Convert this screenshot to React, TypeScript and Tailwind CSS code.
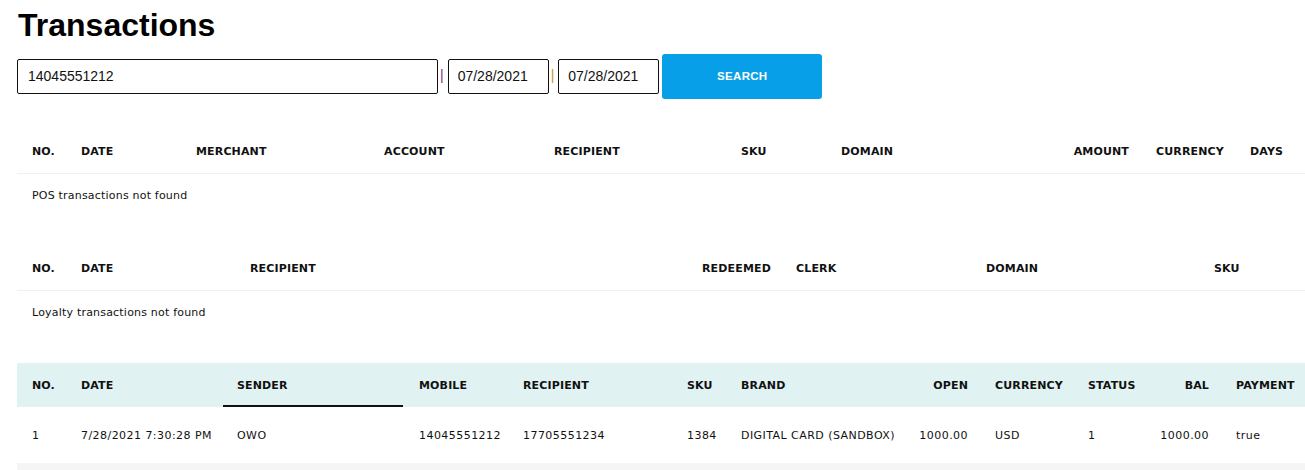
import React from "react";

const F = { fontFamily: '"DejaVu Sans", Verdana, sans-serif' };

type Col = { label: string; w: number; right?: boolean };

const posCols: Col[] = [
  { label: "NO.", w: 50 },
  { label: "DATE", w: 115 },
  { label: "MERCHANT", w: 188 },
  { label: "ACCOUNT", w: 170 },
  { label: "RECIPIENT", w: 187 },
  { label: "SKU", w: 100 },
  { label: "DOMAIN", w: 222 },
  { label: "AMOUNT", w: 93, right: true },
  { label: "CURRENCY", w: 94 },
  { label: "DAYS", w: 69 },
];

const loyCols: Col[] = [
  { label: "NO.", w: 50 },
  { label: "DATE", w: 169 },
  { label: "RECIPIENT", w: 452 },
  { label: "REDEEMED", w: 94 },
  { label: "CLERK", w: 190 },
  { label: "DOMAIN", w: 228 },
  { label: "SKU", w: 105 },
];

const txCols: Col[] = [
  { label: "NO.", w: 50 },
  { label: "DATE", w: 156 },
  { label: "SENDER", w: 182 },
  { label: "MOBILE", w: 104 },
  { label: "RECIPIENT", w: 164 },
  { label: "SKU", w: 54 },
  { label: "BRAND", w: 180 },
  { label: "OPEN", w: 74, right: true },
  { label: "CURRENCY", w: 93 },
  { label: "STATUS", w: 73 },
  { label: "BAL", w: 75, right: true },
  { label: "PAYMENT", w: 83 },
];

const txRow = [
  "1",
  "7/28/2021 7:30:28 PM",
  "OWO",
  "14045551212",
  "17705551234",
  "1384",
  "DIGITAL CARD (SANDBOX)",
  "1000.00",
  "USD",
  "1",
  "1000.00",
  "true",
];

function tpl(cols: Col[]) {
  return cols.map((c) => `${c.w}px`).join(" ");
}

function HeaderRow({ cols, active, bg }: { cols: Col[]; active?: number; bg?: boolean }) {
  return (
    <div
      className={`grid items-center ${bg ? "h-[44px] bg-[#e0f2f2] pt-[2px]" : "h-[43px] border-b border-[#f0f0f0]"}`}
      style={{ gridTemplateColumns: tpl(cols) }}
    >
      {cols.map((c, i) => (
        <div
          key={i}
          className={`relative flex h-full items-center text-[11px] font-bold tracking-[0.15px] text-[#111] whitespace-nowrap ${
            i === 0 ? "pl-[15px]" : "pl-[14px]"
          } ${c.right ? "justify-end pr-[13px]" : ""}`}
          style={F}
        >
          {c.label}
          {active === i && <span className="absolute bottom-0 left-0 right-[2px] h-[2px] bg-[#111]" />}
        </div>
      ))}
    </div>
  );
}

export default function App() {
  return (
    <div className="min-h-[470px] w-[1305px] overflow-hidden bg-white">
      <h1
        className="pl-[18px] pt-[5px] text-[32px] font-bold leading-[40px] text-black"
        style={{ fontFamily: '"Liberation Sans", Arial, sans-serif' }}
      >
        Transactions
      </h1>

      <div className="mt-[9px] flex items-start pl-[17px]" style={{ fontFamily: '"Liberation Sans", Arial, sans-serif' }}>
        <div className="mt-[5px] flex h-[35px] w-[421px] items-center rounded-[2px] border border-[#111] pl-[10px] text-[14px] text-[#111]">
          14045551212
        </div>
        <span className="ml-[2px] mr-[4px] mt-[13px] text-[14px] leading-[16px] text-[#7a2a7a]">|</span>
        <div className="mt-[5px] flex h-[35px] w-[101px] items-center rounded-[2px] border border-[#111] pl-[9px] text-[14px] text-[#111]">
          07/28/2021
        </div>
        <span className="ml-[2px] mr-[4px] mt-[13px] text-[14px] leading-[16px] text-[#c8902a]">|</span>
        <div className="mt-[5px] flex h-[35px] w-[101px] items-center rounded-[2px] border border-[#111] pl-[9px] text-[14px] text-[#111]">
          07/28/2021
        </div>
        <button className="ml-[3px] flex h-[45px] w-[160px] items-center justify-center rounded-[3px] bg-[#079fe8] text-[11.5px] font-bold tracking-[0.3px] text-white">
          SEARCH
        </button>
      </div>

      <div className="ml-[17px] mt-[32px] w-[1288px]">
        <HeaderRow cols={posCols} />
        <div className="flex h-[44px] items-center pl-[15px] text-[11px] tracking-[0.2px] text-[#111]" style={F}>
          POS transactions not found
        </div>
      </div>

      <div className="ml-[17px] mt-[30px] w-[1288px]">
        <HeaderRow cols={loyCols} />
        <div className="flex h-[44px] items-center pl-[15px] text-[11px] tracking-[0.2px] text-[#111]" style={F}>
          Loyalty transactions not found
        </div>
      </div>

      <div className="ml-[17px] mt-[28px] w-[1288px]">
        <HeaderRow cols={txCols} active={2} bg />
        <div className="grid h-[56px] items-center pt-[3px]" style={{ gridTemplateColumns: tpl(txCols) }}>
          {txRow.map((v, i) => (
            <div
              key={i}
              className={`flex items-center text-[11px] tracking-[0.45px] text-[#111] whitespace-nowrap ${
                i === 0 ? "pl-[15px]" : "pl-[14px]"
              } ${txCols[i].right ? "justify-end pr-[13px]" : ""}`}
              style={F}
            >
              {v}
            </div>
          ))}
        </div>
        <div className="h-[40px] bg-[#f5f5f5]" />
      </div>
    </div>
  );
}
